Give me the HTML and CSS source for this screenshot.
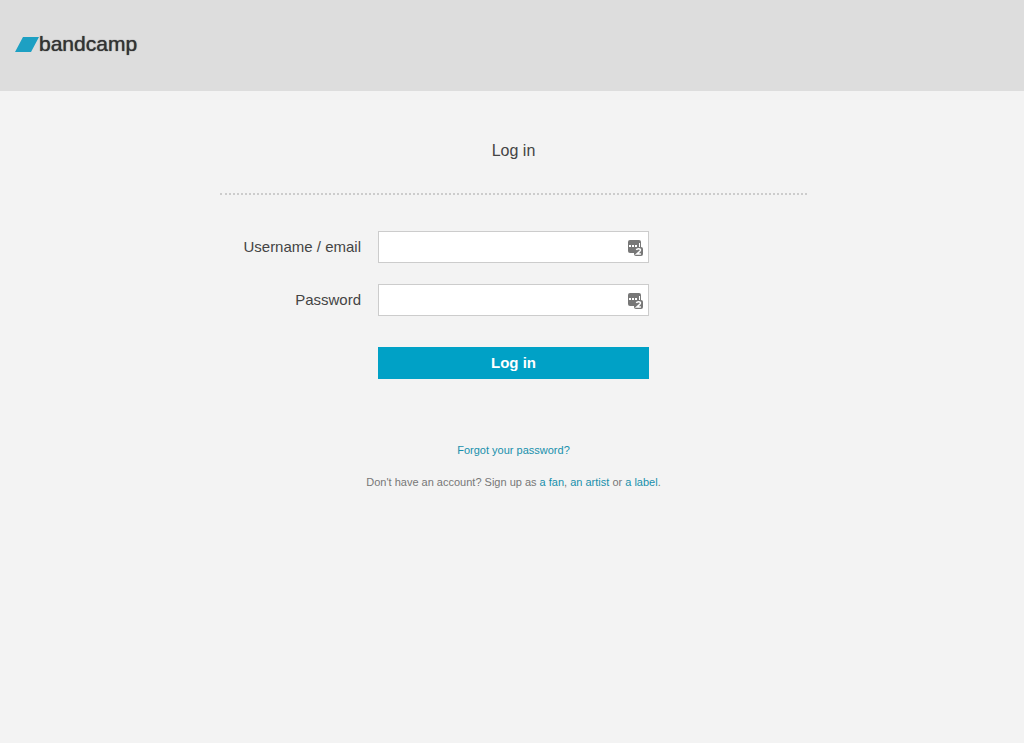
FILE: index.html
```html
<!DOCTYPE html>
<html lang="en">
<head>
<meta charset="utf-8">
<meta name="viewport" content="width=device-width, initial-scale=1">
<title>Log in | Bandcamp</title>
<link rel="stylesheet" href="styles.css">
</head>
<body>
	<svg class="sprite" aria-hidden="true">
		<symbol id="autofill" viewBox="0 0 16 18">
			<path fill="#777" d="M2 1h9q2 0 2 2v9q0 2-2 2h-9q-2 0-2-2v-9q0-2 2-2z"/>
			<path fill="#fff" d="M1 6h2v2h-2zM4 6h2v2h-2zM7 6h2v2h-2zM11 4h1v4h-1z"/>
			<path fill="#777" d="M8 8h5q2 0 2 2v5q0 2-2 2h-5q-2 0-2-2v-5q0-2 2-2z"/>
			<path fill="none" stroke="#fff" stroke-width="1.5" d="M8.4 11q.4-1.3 2.1-1.3 2 0 2 1.4 0 .9-1.6 2.1l-2 1.7h4"/>
		</symbol>
	</svg>
	<header class="header">
		<a class="logo" href="#">
			<svg class="logo-mark" viewBox="0 0 24 15" aria-hidden="true"><path fill="#1da0c3" d="M8 0h16l-8 15h-16z"/></svg>
			<span>bandcamp</span>
		</a>
	</header>
	<main class="main">
		<div class="login">
			<h1 class="title">Log in</h1>
			<form class="form">
				<label class="label" for="username">Username / email</label>
				<div class="field">
					<input class="input" type="text" id="username" name="username">
					<svg class="autofill"><use href="#autofill"/></svg>
				</div>
				<label class="label" for="password">Password</label>
				<div class="field">
					<input class="input" type="password" id="password" name="password">
					<svg class="autofill"><use href="#autofill"/></svg>
				</div>
				<button class="submit" type="submit">Log in</button>
			</form>
			<p class="note"><a href="#">Forgot your password?</a></p>
			<p class="note">Don't have an account? Sign up as <a href="#">a fan</a>, <a href="#">an artist</a> or <a href="#">a label</a>.</p>
		</div>
	</main>
</body>
</html>
```
FILE: styles.css
```css
* {
	box-sizing: border-box;
}

body {
	margin: 0;
	background: #f3f3f3;
	color: #444;
	font-family: "Liberation Sans", Arial, sans-serif;
	font-size: 15px;
}

.sprite {
	display: none;
}

.header {
	background: #ddd;
	padding: 32px 15px 35px;
}

.logo {
	display: inline-flex;
	align-items: center;
	color: #333;
	font-size: 21px;
	line-height: 24px;
	text-decoration: none;
	text-shadow: 0 0 1px #333;
}

.logo-mark {
	width: 24px;
	height: 15px;
}

.main {
	padding: 0 12px 0 15px;
}

.login {
	max-width: 587px;
	margin: 0 auto;
	text-align: center;
}

.title {
	margin: 0;
	padding: 49px 0 31px;
	border-bottom: 2px dotted #ccc;
	font-size: 16px;
	font-weight: normal;
	line-height: 22px;
}

.form {
	display: grid;
	grid-template-columns: 1fr 271px 1fr;
	gap: 21px 0;
	padding: 36px 0 62px;
}

.label {
	grid-column: 1;
	padding-right: 17px;
	line-height: 32px;
	text-align: right;
}

.field {
	position: relative;
}

.input {
	display: block;
	width: 100%;
	height: 32px;
	padding: 0 28px 0 8px;
	border: 1px solid #ccc;
	border-radius: 0;
	background: #fff;
	font: inherit;
}

/* password manager badge over the right end of the input */
.autofill {
	position: absolute;
	top: 8px;
	right: 5px;
	width: 16px;
	height: 18px;
}

.submit {
	grid-column: 2;
	height: 32px;
	margin-top: 10px;
	padding: 0 0 2px;
	border: 0;
	background: #00a1c6;
	color: #fff;
	font: bold 15px "Liberation Sans", Arial, sans-serif;
	cursor: pointer;
}

.note {
	margin: 0 0 14px;
	color: #777;
	font-size: 11px;
	line-height: 18px;
}

.note a {
	color: #1890ac;
	text-decoration: none;
}
```
